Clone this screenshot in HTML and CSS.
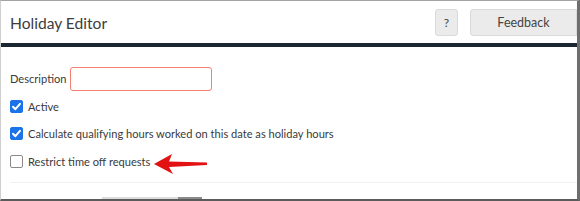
FILE: index.html
```html
<!DOCTYPE html>
<html>
<head>
<meta charset="utf-8">
<link rel="stylesheet" href="styles.css">
</head>
<body>
<div class="frame">
  <header class="header">
    <h1 class="title">Holiday Editor</h1>
    <div class="actions">
      <button class="btn btn-help">?</button>
      <button class="btn btn-feedback">Feedback</button>
    </div>
  </header>
  <div class="rule"></div>
  <main class="content">
    <div class="field">
      <label class="field-label">Description</label>
      <input class="text-input" type="text">
    </div>
    <label class="check-row"><span class="box checked"><svg viewBox="0 0 13 13" width="13" height="13"><path d="M3 6.8 L5.4 9.2 L10 3.8" fill="none" stroke="#fff" stroke-width="2" stroke-linecap="round" stroke-linejoin="round"/></svg></span>Active</label>
    <label class="check-row"><span class="box checked"><svg viewBox="0 0 13 13" width="13" height="13"><path d="M3 6.8 L5.4 9.2 L10 3.8" fill="none" stroke="#fff" stroke-width="2" stroke-linecap="round" stroke-linejoin="round"/></svg></span>Calculate qualifying hours worked on this date as holiday hours</label>
    <label class="check-row"><span class="box"></span>Restrict time off requests
      <svg class="arrow" viewBox="0 0 56 22" width="56" height="22"><polygon points="1,11 19,1 16,8.5 54,9.5 54,12 16,14 20,21" fill="#e31212"/></svg>
    </label>
    <div class="separator"></div>
  </main>
  <div class="scrollbar"><span class="track"></span><span class="thumb"></span></div>
</div>
</body>
</html>
```
FILE: styles.css
```css
html, body {
  margin: 0;
  padding: 0;
  background: #ffffff;
}
body {
  width: 580px;
  height: 201px;
  overflow: hidden;
  font-family: Lato, "Open Sans", sans-serif;
  color: #3a3a3a;
}
.frame {
  position: relative;
  box-sizing: border-box;
  width: 580px;
  height: 201px;
  border-top: 1px solid #a3a3a3;
  border-left: 1px solid #cfcfcf;
  border-right: 3px solid #6e6e6e;
  border-bottom: 2px solid #5b5b5b;
  background: #fff;
  overflow: hidden;
}
.header {
  height: 42px;
  display: flex;
  align-items: center;
  justify-content: space-between;
  padding-left: 9px;
}
.title {
  margin: 0;
  font-size: 15.6px;
  font-weight: 400;
  color: #3d3d3d;
  padding-top: 2px;
}
.actions {
  display: flex;
  gap: 12px;
  align-items: center;
  padding-top: 1px;
}
.btn {
  height: 27px;
  box-sizing: border-box;
  border: 1px solid #dadada;
  background: #ebebeb;
  border-radius: 3px;
  font-family: Lato, "Open Sans", sans-serif;
  font-size: 12.5px;
  color: #444;
  padding: 0;
}
.btn-help {
  width: 23px;
  font-size: 12px;
}
.btn-feedback {
  width: 107px;
  border-top-right-radius: 0;
  border-bottom-right-radius: 0;
}
.rule {
  height: 4px;
  background: #1b2631;
}
.content {
  padding: 19px 0 0 9px;
}
.field {
  display: flex;
  align-items: center;
  gap: 4px;
  height: 25px;
  margin-bottom: 8px;
}
.field-label {
  font-size: 11.1px;
  color: #3a3a3a;
}
.text-input {
  width: 142px;
  height: 24px;
  box-sizing: border-box;
  border: 1px solid #f5806e;
  border-radius: 3px;
  margin: 0;
  padding: 0 4px;
  outline: none;
}
.check-row {
  display: flex;
  align-items: center;
  height: 14px;
  margin-bottom: 13.5px;
  font-size: 11.1px;
  color: #3a3a3a;
}
.box {
  width: 13px;
  height: 13px;
  box-sizing: border-box;
  border: 1px solid #8a8a8a;
  border-radius: 2px;
  margin-right: 5px;
  display: inline-flex;
  background: #fff;
}
.box.checked {
  background: #1a73e8;
  border-color: #1a73e8;
}
.box svg {
  margin: -1px;
}
.arrow {
  margin-left: 3px;
  margin-top: 5px;
}
.separator {
  height: 1px;
  background: #f0f0f0;
  margin-top: 5px;
}
.scrollbar {
  position: absolute;
  left: 101px;
  bottom: 0;
  height: 2px;
  display: flex;
}
.track {
  width: 76px;
  background: #dcdcdc;
}
.thumb {
  width: 24px;
  background: #8a8a8a;
}
```
